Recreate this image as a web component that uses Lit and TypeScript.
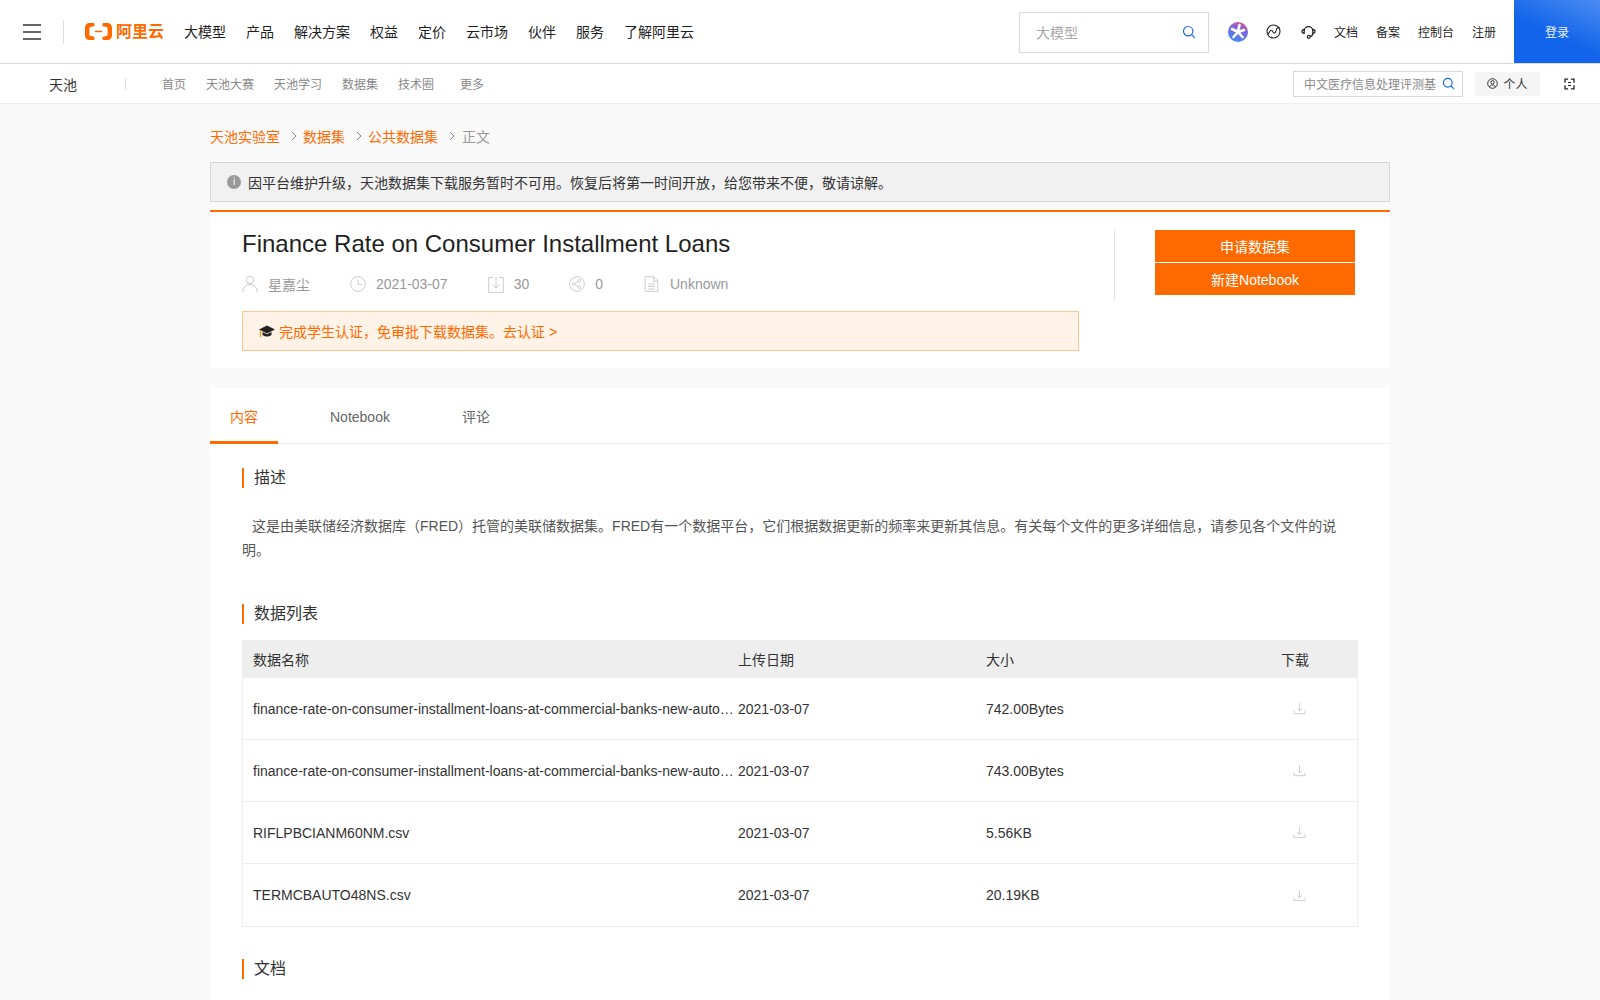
import { LitElement, html, css, svg } from 'lit';
import { customElement } from 'lit/decorators.js';

const mainNav = ['大模型', '产品', '解决方案', '权益', '定价', '云市场', '伙伴', '服务', '了解阿里云'];
const rows = [
    { name: 'finance-rate-on-consumer-installment-loans-at-commercial-banks-new-auto-loans-60-month-loan-term.csv', date: '2021-03-07', size: '742.00Bytes' },
    { name: 'finance-rate-on-consumer-installment-loans-at-commercial-banks-new-auto-loans-48-month-loan-term.csv', date: '2021-03-07', size: '743.00Bytes' },
    { name: 'RIFLPBCIANM60NM.csv', date: '2021-03-07', size: '5.56KB' },
    { name: 'TERMCBAUTO48NS.csv', date: '2021-03-07', size: '20.19KB' },
];

const searchIcon = svg`<circle cx="6.2" cy="6.2" r="4.7" fill="none" stroke="currentColor" stroke-width="1.2"/><path d="M9.7 9.7 12.6 12.6" stroke="currentColor" stroke-width="1.2" stroke-linecap="round"/>`;
const chevron = html`<svg class="chev" width="6" height="10" viewBox="0 0 6 10"><path d="M1 1l4 4-4 4" fill="none" stroke="#888" stroke-width="1"/></svg>`;

@customElement('app-root')
export class AppRoot extends LitElement {
    static styles = css`
    :host { display: block; height: 1000px; overflow: hidden; background: #f9f9f9; font-family: 'Liberation Sans', 'Noto Sans CJK SC', sans-serif; color: #333; }
    .top { height: 63px; background: #fff; border-bottom: 1px solid #d9d9d9; display: flex; align-items: center; font-size: 14px; color: #1f1f1f; }
    .burger { width: 18px; margin-left: 23px; display: flex; flex-direction: column; gap: 5px; }
    .burger i { display: block; height: 2px; background: #666; }
    .vline { width: 1px; height: 24px; background: #ddd; margin: 0 20px 0 22px; }
    .logo { display: flex; align-items: center; gap: 3px; margin-right: 20px; color: #ff6a00; font-size: 16px; font-weight: 700; line-height: 20px; }
    .logo svg { display: block; }
    .nav { display: flex; gap: 20px; flex: 1; padding-bottom: 1px; }
    .site-search { width: 190px; height: 41px; box-sizing: border-box; border: 1px solid #d9d9d9; display: flex; align-items: center; justify-content: space-between; padding: 0 12px 2px 16px; color: #aaa; margin: 2px 19px 0 0; }
    .site-search svg { color: #1a66e8; }
    .tools { display: flex; align-items: center; font-size: 12px; }
    .tools svg { display: block; }
    .ai { margin-right: 18px; }
    .t1 { margin-right: 20px; }
    .t2 { margin-right: 18px; }
    .tools span { margin-right: 18px; }
    .login { width: 86px; height: 63px; align-self: flex-start; background: linear-gradient(205deg, #4b8cf2, #1264ea 55%); color: #e8f0ff; font-size: 12px; display: flex; align-items: center; justify-content: center; }

    .sub { height: 39px; background: #fff; border-bottom: 1px solid #eee; display: flex; align-items: center; font-size: 12px; color: #888; }
    .brand { font-size: 14px; color: #333; margin-left: 49px; width: 76px; }
    .sub-line { width: 1px; height: 12px; background: #ddd; margin-right: 36px; }
    .sub-nav { display: flex; gap: 20px; flex: 1; }
    .sub-nav .more { margin-left: 6px; }
    .sub-search { width: 170px; height: 26px; box-sizing: border-box; border: 1px solid #d9d9d9; display: flex; align-items: center; justify-content: space-between; padding: 0 7px 0 10px; white-space: nowrap; overflow: hidden; margin-right: 12px; }
    .sub-search svg { color: #1a66e8; flex: none; }
    .personal { width: 65px; height: 24px; background: #f5f5f5; color: #333; display: flex; align-items: center; justify-content: center; gap: 5px; margin-right: 24px; }
    .switch { margin-right: 25px; display: block; }

    .main { width: 1180px; margin: 0 auto; }
    .crumbs { height: 58px; display: flex; align-items: center; gap: 8.5px; font-size: 14px; color: #ff6a00; padding-top: 6px; box-sizing: border-box; }
    .crumbs .cur { color: #999; margin-left: 1px; }
    .chev { margin: 0 -2px 0 2px; }
    .notice { height: 40px; box-sizing: border-box; background: #f1f1f1; border: 1px solid #d5d5d5; display: flex; align-items: center; gap: 7px; padding-left: 16px; font-size: 14px; color: #333; margin-bottom: 8px; }
    .info { width: 14px; height: 14px; border-radius: 50%; background: #999; color: #fff; font-size: 10px; line-height: 14px; text-align: center; }
    .head { background: #fff; border-top: 2px solid #ff6a00; height: 158px; box-sizing: border-box; padding: 16px 34px 0 32px; display: flex; margin-bottom: 20px; }
    .head-left { width: 837px; }
    h1 { font-size: 24px; font-weight: 400; color: #1f1f1f; margin: 0; line-height: 32px; }
    .meta { display: flex; align-items: center; height: 24px; margin-top: 12px; color: #999; font-size: 14px; }
    .meta svg { display: block; margin-right: 10px; }
    .meta svg.doc { margin: 0 11px 0 1px; }
    .meta span { margin-right: 40px; }
    .student { margin-top: 15px; height: 40px; box-sizing: border-box; background: #fff2e6; border: 1px solid #ffc68f; display: flex; align-items: center; padding-left: 16px; color: #ff6a00; font-size: 14px; }
    .student .cap { margin-right: 4px; display: block; }
    .head-right { margin: 1px 0 0 35px; border-left: 1px solid #e5e5e5; height: 72px; padding-left: 40px; display: flex; flex-direction: column; gap: 1px; }
    .btn { width: 200px; height: 32px; background: #ff6a00; color: #fff; font-size: 14px; display: flex; align-items: center; justify-content: center; }
    .btn:first-child { margin-top: 1px; }

    .body { background: #fff; min-height: 612px; }
    .tabs { display: flex; height: 56px; box-sizing: border-box; border-bottom: 1px solid #eee; font-size: 14px; color: #666; }
    .tab { display: flex; align-items: center; padding: 0 20px; box-sizing: border-box; height: 56px; margin-right: 32px; }
    .tab.on { color: #ff6a00; border-bottom: 3px solid #ff6a00; padding-top: 3px; }
    .tab.latin { padding-top: 2px; }
    .content { padding: 24px 32px 0; }
    h2 { margin: 0; font-size: 16px; font-weight: 400; color: #333; border-left: 2px solid #ff6a00; padding-left: 10px; line-height: 20px; height: 20px; }
    p { margin: 26px 0 0; font-size: 14px; line-height: 24px; color: #555; text-indent: 10px; width: 1100px; }
    .list-h { margin-top: 42px; }
    .tbl { margin-top: 16px; width: 1116px; border: 1px solid #eee; border-top: none; box-sizing: border-box; font-size: 14px; color: #333; }
    .tr { display: grid; grid-template-columns: 485px 248px 295px 1fr; align-items: center; height: 62px; border-bottom: 1px solid #eee; box-sizing: border-box; padding-left: 10px; }
    .tr:last-child { border-bottom: none; }
    .tr.th { height: 38px; background: #eee; border-bottom: none; margin: 0 -1px; padding-left: 11px; }
    .name { white-space: nowrap; overflow: hidden; text-overflow: ellipsis; padding-right: 4px; }
    .dl { display: block; margin-left: 12px; }
    .doc-h { margin-top: 32px; }
  `;

    render() {
        return html`
      <div class="top">
        <div class="burger"><i></i><i></i><i></i></div>
        <div class="vline"></div>
        <div class="logo">
          <svg width="29" height="19" viewBox="0 0 29 19" fill="#ff6a00">
            <path d="M10 1H5.500C2.800 1 1 2.800 1 5.500v8C1 16.200 2.800 18 5.500 18H10l.8-2.900-4.300-1c-.7-.2-1.100-.7-1.100-1.400V6.300c0-.7.4-1.200 1.100-1.400l4.300-1zM19 1h4.500C26.200 1 28 2.800 28 5.500v8c0 2.700-1.800 4.500-4.500 4.500H19l-.8-2.900 4.300-1c.7-.2 1.100-.7 1.100-1.400V6.300c0-.7-.4-1.200-1.100-1.400l-4.300-1z"/>
            <rect x="11" y="8.700" width="7" height="1.500"/>
          </svg>
          <span>阿里云</span>
        </div>
        <div class="nav">${mainNav.map((n) => html`<span>${n}</span>`)}</div>
        <div class="site-search">大模型<svg width="14" height="14" viewBox="0 0 14 14">${searchIcon}</svg></div>
        <div class="tools">
          <svg class="ai" width="20" height="20" viewBox="0 0 20 20">
            <defs><linearGradient id="aig" x1="0.7" y1="0" x2="0.3" y2="1"><stop offset="0" stop-color="#d2558f"/><stop offset="0.4" stop-color="#7a66e0"/><stop offset="1" stop-color="#3f8cf5"/></linearGradient></defs>
            <circle cx="10" cy="10" r="10" fill="url(#aig)"/>
            <path d="M11.500 3 10 9M4 7l6 3 6-2M10 10l-4.500 5M10 10l4.500 5" stroke="#fff" stroke-width="2.600" stroke-linecap="round" fill="none"/>
          </svg>
          <svg class="t1" width="15" height="15" viewBox="0 0 15 15" fill="none" stroke="#222" stroke-width="1.100"><circle cx="7.500" cy="7.500" r="6.500"/><path d="M1.500 10.500C3 9.800 3.600 6.300 5.300 6.300s1.500 3 3.200 2.700 1.700-4.200 2.800-5 1.800-.4 2.300 0"/></svg>
          <svg class="t2" width="15" height="15" viewBox="0 0 15 15" fill="none" stroke="#222" stroke-width="1.200"><path d="M3.200 7A4.300 4.300 0 0 1 11.800 7"/><path d="M3.200 5.300C1.900 5.300 1 6.200 1 7.300s.9 2 2.200 2zM11.800 5.300c1.300 0 2.200.9 2.200 2s-.9 2-2.200 2z"/><path d="M11.800 9.300c0 2-1 3-2.500 3.300"/><circle cx="7.800" cy="12.800" r="1.500"/></svg>
          <span>文档</span><span>备案</span><span>控制台</span><span>注册</span>
        </div>
        <div class="login">登录</div>
      </div>

      <div class="sub">
        <div class="brand">天池</div>
        <div class="sub-line"></div>
        <div class="sub-nav"><span>首页</span><span>天池大赛</span><span>天池学习</span><span>数据集</span><span>技术圈</span><span class="more">更多</span></div>
        <div class="sub-search"><span>中文医疗信息处理评测基</span><svg width="13" height="13" viewBox="0 0 14 14">${searchIcon}</svg></div>
        <div class="personal">
          <svg width="11" height="11" viewBox="0 0 11 11" fill="none" stroke="#333"><circle cx="5.500" cy="5.500" r="4.800"/><circle cx="5.500" cy="4.300" r="1.700"/><path d="M2.500 9c.6-1.500 1.700-2 3-2s2.400.5 3 2"/></svg>
          个人
        </div>
        <svg class="switch" width="11" height="12" viewBox="0 0 11 12" fill="none" stroke="#222" stroke-width="1.300"><path d="M4 1.200H1v3.600M7 1.200h3v3.600M1 7.200v3.600h3M10 7.200v3.600H7"/><path d="M4 4.500h3M4 7.500h3" stroke-width="1.100"/></svg>
      </div>

      <div class="main">
        <div class="crumbs"><span>天池实验室</span>${chevron}<span>数据集</span>${chevron}<span>公共数据集</span>${chevron}<span class="cur">正文</span></div>
        <div class="notice"><div class="info">i</div>因平台维护升级，天池数据集下载服务暂时不可用。恢复后将第一时间开放，给您带来不便，敬请谅解。</div>

        <div class="head">
          <div class="head-left">
            <h1>Finance Rate on Consumer Installment Loans</h1>
            <div class="meta">
              <svg width="16" height="18" viewBox="0 0 16 18" fill="none" stroke="#ccc"><circle cx="8" cy="5" r="3.800"/><path d="M.6 17.500c0-4.500 3-8 7.400-8s7.400 3.500 7.400 8"/></svg><span>星嘉尘</span>
              <svg width="16" height="16" viewBox="0 0 16 16" fill="none" stroke="#ccc"><circle cx="8" cy="8" r="7.300"/><path d="M8 3.500V8.500h4"/></svg><span>2021-03-07</span>
              <svg width="16" height="17" viewBox="0 0 16 17" fill="none" stroke="#ccc"><path d="M5 1.500H.7v15h14.600v-15H11M8 1v11M4.500 8.500 8 12l3.500-3.500"/></svg><span>30</span>
              <svg width="16" height="16" viewBox="0 0 16 16" fill="none" stroke="#ccc"><circle cx="8" cy="8" r="7.300"/><circle cx="4.500" cy="8" r="1.300"/><circle cx="10.500" cy="4.800" r="1.300"/><circle cx="10.500" cy="11.200" r="1.300"/><path d="M5.700 7.300 9.300 5.500M5.700 8.700l3.600 1.800"/></svg><span>0</span>
              <svg class="doc" width="15" height="16" viewBox="0 0 15 16" fill="none" stroke="#ccc"><path d="M1.200.700h8.300l4.300 4.300v10.300H1.200zM9.500.700v4.600h4.300M4 8h7M4 10.500h7M4 13h7"/></svg><span>Unknown</span>
            </div>
            <div class="student">
              <svg class="cap" width="16" height="15" viewBox="0 0 16 15"><path d="M8 1.500 0 5.500l8 4 8-4z" fill="#222"/><path d="M3.500 8v3c1.500 1 3 1.500 4.500 1.500s3-.5 4.500-1.500V8L8 10.300z" fill="#222"/><path d="M1.500 6v7" stroke="#e0a526" stroke-width="1.400"/></svg>
              完成学生认证，免审批下载数据集。去认证 &gt;
            </div>
          </div>
          <div class="head-right">
            <div class="btn">申请数据集</div>
            <div class="btn">新建Notebook</div>
          </div>
        </div>

        <div class="body">
          <div class="tabs">
            <div class="tab on">内容</div>
            <div class="tab latin">Notebook</div>
            <div class="tab">评论</div>
          </div>
          <div class="content">
            <h2>描述</h2>
            <p>这是由美联储经济数据库（FRED）托管的美联储数据集。FRED有一个数据平台，它们根据数据更新的频率来更新其信息。有关每个文件的更多详细信息，请参见各个文件的说明。</p>
            <h2 class="list-h">数据列表</h2>
            <div class="tbl">
              <div class="tr th"><span>数据名称</span><span>上传日期</span><span>大小</span><span>下载</span></div>
              ${rows.map((r) => html`
                <div class="tr">
                  <div class="name">${r.name}</div>
                  <div>${r.date}</div>
                  <div>${r.size}</div>
                  <svg class="dl" width="13" height="13" viewBox="0 0 14 14" fill="none" stroke="#ccc"><path d="M7 1v8M4.500 6.800 7 9.300l2.500-2.500M1 9v3.500h12V9"/></svg>
                </div>`)}
            </div>
            <h2 class="doc-h">文档</h2>
          </div>
        </div>
      </div>
    `;
    }
}
